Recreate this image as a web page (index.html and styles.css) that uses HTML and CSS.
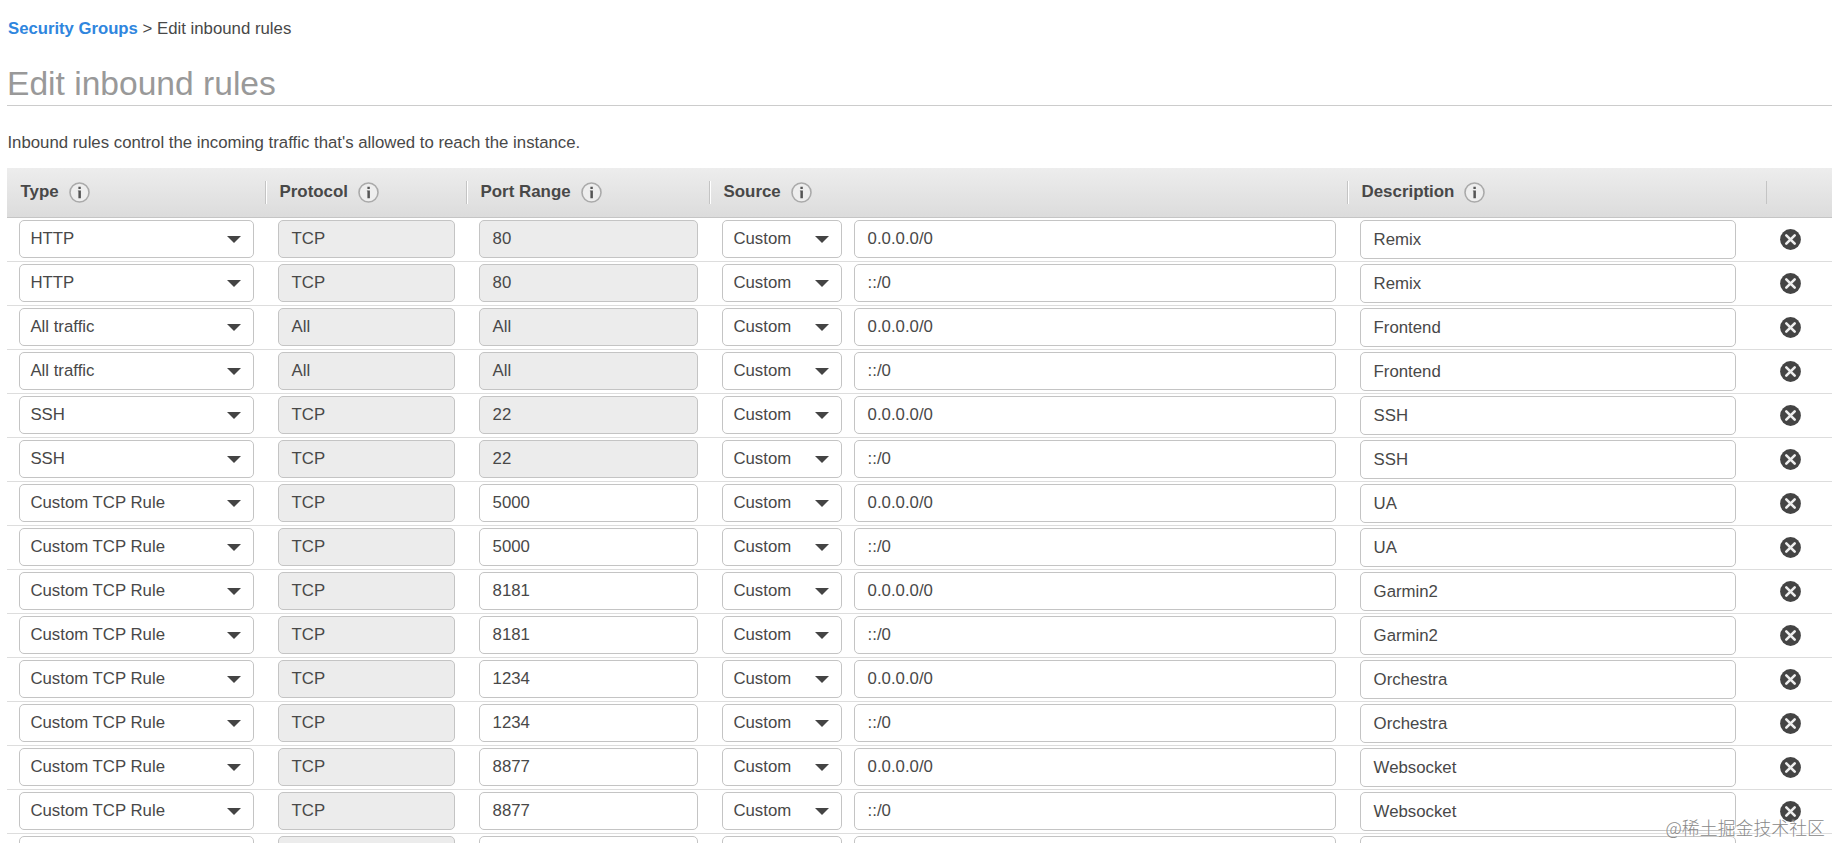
FILE: index.html
```html
<!DOCTYPE html>
<html lang="en">
<head>
<meta charset="utf-8">
<title>Edit inbound rules</title>
<link rel="stylesheet" href="styles.css">
</head>
<body>
<svg class="defs" aria-hidden="true">
  <symbol id="info" viewBox="0 0 21 21">
    <circle cx="10.5" cy="10.5" r="9.5" fill="#eee" stroke="#aaa" stroke-width="1.6"/>
    <path d="M9.4 4.8h2.4v2.2H9.4zM8.9 8.4h3v7.8H9.4V9.2h-.5z" fill="#555"/>
  </symbol>
  <symbol id="remove" viewBox="0 0 21 21">
    <circle cx="10.5" cy="10.5" r="10.4" fill="#444"/>
    <path d="M6.3 6.3l8.4 8.4M14.7 6.3l-8.4 8.4" stroke="#eee" stroke-width="2.6" stroke-linecap="round"/>
  </symbol>
</svg>
<nav class="breadcrumb"><a class="crumb-link">Security Groups</a> <span class="crumb-sep">&gt;</span> <span>Edit inbound rules</span></nav>
<h1 class="title"><span class="title-text">Edit inbound rules</span></h1>
<p class="intro">Inbound rules control the incoming traffic that's allowed to reach the instance.</p>
<main class="table">
  <div class="head">
    <div class="th"><span class="label">Type</span><svg class="info"><use href="#info"/></svg></div>
    <div class="th"><span class="label">Protocol</span><svg class="info"><use href="#info"/></svg></div>
    <div class="th"><span class="label">Port Range</span><svg class="info"><use href="#info"/></svg></div>
    <div class="th"><span class="label">Source</span><svg class="info"><use href="#info"/></svg></div>
    <div class="th"><span class="label">Description</span><svg class="info"><use href="#info"/></svg></div>
    <div class="th th-last"></div>
  </div>
  <div id="rules"></div>
</main>
<div class="watermark">@稀土掘金技术社区</div>
<script src="rules.js"></script>
</body>
</html>
```
FILE: styles.css
```css
html, body { height: 100%; }
body {
  margin: 0;
  overflow: hidden;
  background: #fff;
  color: #484848;
  font: 16.8px/20px "Liberation Sans", Arial, sans-serif;
  display: flex;
  flex-direction: column;
}
.defs { position: absolute; width: 0; height: 0; }
.breadcrumb { margin: 19px 0 0 8px; height: 20px; flex: none; white-space: nowrap; }
.crumb-link { color: #2f86de; font-weight: bold; font-size: 16.7px; }
.title {
  margin: 24px 0 0 7px;
  height: 42px;
  flex: none;
  border-bottom: 1px solid #ccc;
  color: #999;
  font-weight: normal;
  font-size: 33.6px;
  line-height: 42px;
}
.intro { margin: 27px 0 0 7.4px; height: 20px; flex: none; }
.table { margin: 15px 0 0 7px; flex: none; }
.head, .row {
  display: grid;
  grid-template-columns: 258px 201px 243px 638px 419px 1fr;
}
.head {
  height: 49px;
  border-bottom: 1px solid #c5c5c5;
  background: linear-gradient(#ededed, #dcdcdc);
}
.th {
  height: 23px;
  margin-top: 13px;
  padding-left: 13.5px;
  border-left: 1px solid #c4c4c4;
  box-shadow: inset 1px 0 #fff;
  display: flex;
  align-items: center;
  line-height: 20px;
  font-weight: bold;
}
.th:first-child { border-left: 0; box-shadow: none; }
.th-last { box-shadow: none; }
.label { padding-bottom: 2px; font-size: 16.9px; }
.info { width: 21px; height: 21px; margin-left: 10px; }
.row { height: 43px; border-bottom: 1px solid #ddd; }
.cell { padding: 2px 11px 0 13px; display: flex; gap: 12px; }
.cell:first-child { padding-left: 12px; }
.cell-desc { padding-right: 30px; }
.cell-remove { padding: 11px 0 0 14px; }
.field {
  box-sizing: border-box;
  height: 38px;
  flex: 1;
  border: 1px solid #c4c4c4;
  border-radius: 5px;
  padding: 8px 12px 0 12.6px;
  white-space: nowrap;
}
.readonly { background: #ececec; }
.select { display: flex; justify-content: space-between; padding-left: 10.4px; }
.select::after {
  content: "";
  width: 14px;
  height: 7px;
  margin-top: 7px;
  background: #444;
  clip-path: polygon(0 0, 100% 0, 50% 100%);
}
.source { flex: 0 0 120px; }
.desc { height: 39px; padding-top: 9px; }
.remove { width: 21px; height: 21px; }
.watermark {
  position: absolute;
  right: 7px;
  bottom: 3px;
  font: 300 17.9px/26px "Noto Sans CJK SC", sans-serif;
  color: #888;
  text-shadow: 0 0 2px #fff;
  white-space: nowrap;
}
```
FILE: rules.js
```js
// Each group yields an IPv4 rule and an IPv6 rule.
const groups = [
  ["HTTP", "TCP", "80", "Remix"],
  ["All traffic", "All", "All", "Frontend"],
  ["SSH", "TCP", "22", "SSH"],
  ["Custom TCP Rule", "TCP", "5000", "UA"],
  ["Custom TCP Rule", "TCP", "8181", "Garmin2"],
  ["Custom TCP Rule", "TCP", "1234", "Orchestra"],
  ["Custom TCP Rule", "TCP", "8877", "Websocket"],
  ["", "", "", ""]
];
const row = ([type, protocol, port, desc], source) => `
  <div class="row">
    <div class="cell"><div class="field select">${type}</div></div>
    <div class="cell"><div class="field readonly">${protocol}</div></div>
    <div class="cell"><div class="field ${type.startsWith("Custom") || !type ? "" : "readonly"}">${port}</div></div>
    <div class="cell"><div class="field select source">${type ? "Custom" : ""}</div><div class="field">${source}</div></div>
    <div class="cell cell-desc"><div class="field desc">${desc}</div></div>
    <div class="cell cell-remove"><svg class="remove"><use href="#remove"/></svg></div>
  </div>`;
document.getElementById("rules").innerHTML = groups
  .map(g => g[0] ? row(g, "0.0.0.0/0") + row(g, "::/0") : row(g, ""))
  .join("");
```
